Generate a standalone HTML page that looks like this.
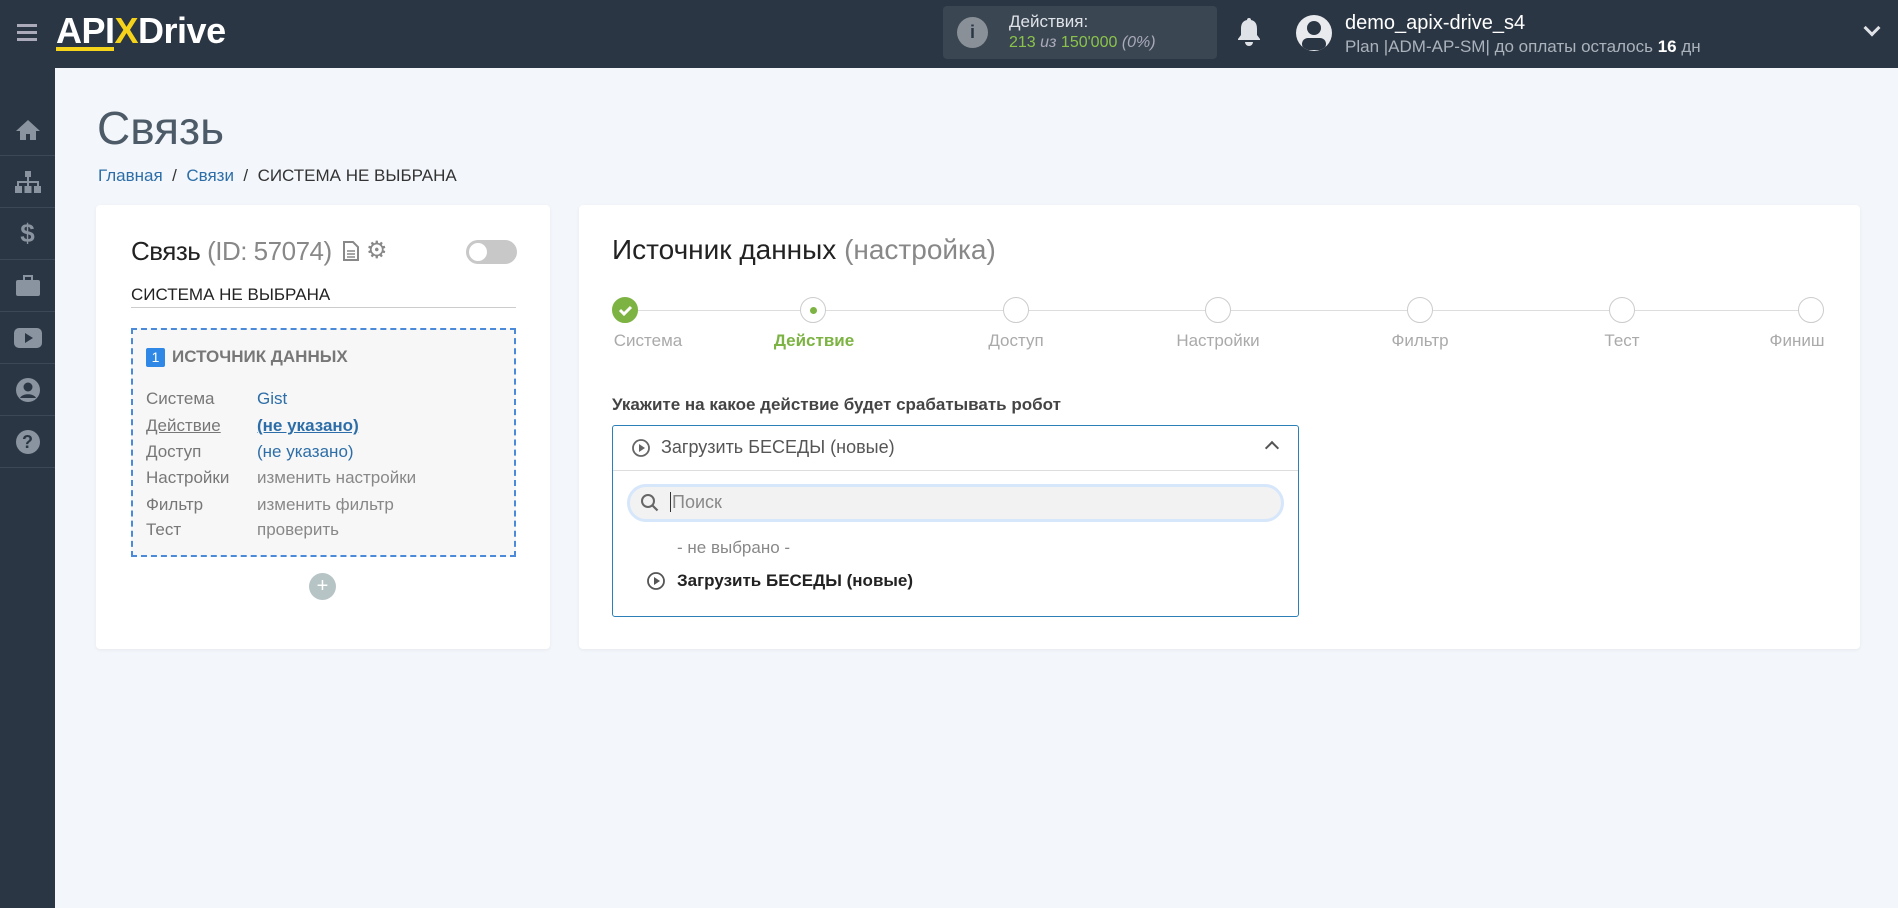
<!DOCTYPE html>
<html><head><meta charset="utf-8"><style>
*{box-sizing:border-box;margin:0;padding:0}
body{width:1898px;height:908px;overflow:hidden;background:#f3f6fa;font-family:"Liberation Sans",sans-serif;position:relative;color:#333}
.abs{position:absolute}
#hdr{left:0;top:0;width:1898px;height:68px;background:#2b3644}
#side{left:0;top:68px;width:55px;height:840px;background:#2b3644}
.si{position:absolute;left:0;width:55px;height:52px;border-bottom:1px solid #3c4858;display:flex;align-items:center;justify-content:center}
.card{background:#fff;border-radius:4px;box-shadow:0 1px 3px rgba(0,0,0,.06)}
.row{position:absolute;left:146px;font-size:17px;color:#777}
.val{position:absolute;left:257px;font-size:17px;color:#888}
.step{position:absolute;top:297px;width:26px;height:26px;border-radius:50%;border:1px solid #ccc;background:#fff}
.sl{position:absolute;top:331px;font-size:17px;color:#aaa;transform:translateX(-50%);white-space:nowrap}
</style></head><body>
<div id="hdr" class="abs">
 <div class="abs" style="left:17px;top:24px;width:20px;height:3px;background:#aab;box-shadow:0 7px 0 #aab,0 14px 0 #aab"></div>
 <div class="abs" style="left:56px;top:10px;font-size:36px;font-weight:bold;color:#fff;letter-spacing:-0.5px">API<span style="color:#f6d31b">X</span>Drive</div>
 <div class="abs" style="left:56px;top:47px;width:58px;height:4px;background:#f6d31b"></div>
 <div class="abs" style="left:943px;top:6px;width:274px;height:53px;background:#3b4653;border-radius:4px">
  <div class="abs" style="left:14px;top:11px;width:31px;height:31px;border-radius:50%;background:#8a9098;color:#2b3644;font-weight:bold;text-align:center;line-height:31px;font-size:18px">i</div>
  <div class="abs" style="left:66px;top:6px;font-size:17px;color:#dfe3e8">Действия:</div>
  <div class="abs" style="left:66px;top:28px;font-size:16px;color:#8bc34a">213 <i style="color:#aab">из</i> 150'000 <i style="color:#aab">(0%)</i></div>
 </div>
 <svg class="abs" style="left:1236px;top:17px" width="26" height="30" viewBox="0 0 26 30"><path d="M13 1c-1.5 0-2 1-2 2C6 4 5 8 5 12v6l-3 4v1h22v-1l-3-4v-6c0-4-1-8-6-9 0-1-.5-2-2-2z" fill="#dfe3e8"/><path d="M9 25a4 4 0 0 0 8 0z" fill="#dfe3e8"/></svg>
 <div class="abs" style="left:1296px;top:15px;width:36px;height:36px;border-radius:50%;background:#e8eaee;overflow:hidden">
  <div class="abs" style="left:11px;top:6px;width:14px;height:14px;border-radius:50%;background:#2b3644"></div>
  <div class="abs" style="left:6px;top:23px;width:24px;height:12px;border-radius:12px;background:#2b3644"></div>
 </div>
 <div class="abs" style="left:1345px;top:12px;font-size:20px;color:#fff">demo_apix-drive_s4</div>
 <div class="abs" style="left:1345px;top:37px;font-size:17px;color:#aab2bc">Plan |ADM-AP-SM| до оплаты осталось <b style="color:#fff">16</b> дн</div>
 <div class="abs" style="left:1866px;top:22px;width:12px;height:12px;border-right:3px solid #dfe3e8;border-bottom:3px solid #dfe3e8;transform:rotate(45deg)"></div>
</div>
<div id="side" class="abs">
 <div class="si" style="top:36px;border-top:0"><svg width="26" height="22" viewBox="0 0 26 22"><path d="M13 1L1 12h4v9h6v-6h4v6h6v-9h4z" fill="#8a94a0"/></svg></div>
 <div class="si" style="top:88px"><svg width="28" height="24"><rect x="11" y="1" width="6" height="6" fill="#8a94a0"/><rect x="1" y="16" width="7" height="7" fill="#8a94a0"/><rect x="10.5" y="16" width="7" height="7" fill="#8a94a0"/><rect x="20" y="16" width="7" height="7" fill="#8a94a0"/><path d="M14 7v5M4 16v-4h20v4M14 12v4" stroke="#8a94a0" stroke-width="2" fill="none"/></svg></div>
 <div class="si" style="top:140px;color:#8a94a0;font-size:26px;font-weight:bold">$</div>
 <div class="si" style="top:192px"><svg width="26" height="22"><rect x="1" y="5" width="24" height="16" rx="2" fill="#8a94a0"/><rect x="9" y="1" width="8" height="5" fill="none" stroke="#8a94a0" stroke-width="2"/></svg></div>
 <div class="si" style="top:244px"><svg width="28" height="20"><rect x="0" y="0" width="28" height="20" rx="5" fill="#8a94a0"/><path d="M11 5l8 5-8 5z" fill="#2b3644"/></svg></div>
 <div class="si" style="top:296px"><svg width="24" height="24"><circle cx="12" cy="12" r="12" fill="#8a94a0"/><circle cx="12" cy="9" r="4.5" fill="#2b3644"/><path d="M4 20c2-5 14-5 16 0" fill="#2b3644"/></svg></div>
 <div class="si" style="top:348px"><div style="width:24px;height:24px;border-radius:50%;background:#8a94a0;color:#2b3644;font-weight:bold;font-size:18px;text-align:center;line-height:24px">?</div></div>
</div>
<div class="abs" style="left:97px;top:101px;font-size:46px;color:#4d5a67">Связь</div>
<div class="abs" style="left:98px;top:166px;font-size:17px;color:#2d6ea8">Главная <span style="color:#333">&nbsp;/&nbsp;</span> Связи <span style="color:#333">&nbsp;/&nbsp; СИСТЕМА НЕ ВЫБРАНА</span></div>

<div class="abs card" style="left:96px;top:205px;width:454px;height:444px"></div>
<div class="abs" style="left:131px;top:236px;font-size:26px;color:#222;letter-spacing:-0.5px">Связь <span style="color:#888">(ID: 57074)</span></div>
<svg class="abs" style="left:343px;top:241px" width="16" height="20"><path d="M1 1h9l5 5v13H1z" fill="none" stroke="#888" stroke-width="2"/><path d="M4 10h8M4 13h8M4 16h8" stroke="#888" stroke-width="1.5"/></svg>
<div class="abs" style="left:366px;top:240px;font-size:24px;color:#888;line-height:22px">⚙</div>
<div class="abs" style="left:466px;top:240px;width:51px;height:24px;border-radius:12px;background:#c8c8c8"><div class="abs" style="left:3px;top:3px;width:18px;height:18px;border-radius:50%;background:#fff"></div></div>
<div class="abs" style="left:131px;top:285px;font-size:17px;color:#222">СИСТЕМА НЕ ВЫБРАНА</div>
<div class="abs" style="left:131px;top:307px;width:385px;height:1px;background:#ccc"></div>
<div class="abs" style="left:131px;top:328px;width:385px;height:229px;border:2px dashed #4a8ad8;background:#f7f7f7"></div>
<div class="abs" style="left:146px;top:348px;width:19px;height:19px;background:#2f88e6;color:#fff;font-size:14px;text-align:center;line-height:19px;border-radius:2px">1</div>
<div class="abs" style="left:172px;top:347px;font-size:17px;font-weight:bold;color:#777">ИСТОЧНИК ДАННЫХ</div>
<div class="row" style="top:389px">Система</div><div class="val" style="top:389px;color:#2d6ea8">Gist</div>
<div class="row" style="top:416px;text-decoration:underline">Действие</div><div class="val" style="top:416px;color:#2d6ea8;font-weight:bold;text-decoration:underline">(не указано)</div>
<div class="row" style="top:442px">Доступ</div><div class="val" style="top:442px;color:#2d6ea8">(не указано)</div>
<div class="row" style="top:468px">Настройки</div><div class="val" style="top:468px">изменить настройки</div>
<div class="row" style="top:495px">Фильтр</div><div class="val" style="top:495px">изменить фильтр</div>
<div class="row" style="top:520px">Тест</div><div class="val" style="top:520px">проверить</div>
<div class="abs" style="left:309px;top:573px;width:27px;height:27px;border-radius:50%;background:#b7c4c6;color:#fff;text-align:center;line-height:27px;font-size:20px">+</div>

<div class="abs card" style="left:579px;top:205px;width:1281px;height:444px"></div>
<div class="abs" style="left:612px;top:234px;font-size:28px;color:#222">Источник данных <span style="color:#888">(настройка)</span></div>
<div class="abs" style="left:625px;top:310px;width:1186px;height:1px;background:#ddd"></div>
<div class="step" style="left:612px;background:#7cb342;border-color:#7cb342"><svg width="24" height="24"><path d="M7 12l4 4 7-7" stroke="#fff" stroke-width="3" fill="none"/></svg></div>
<div class="step" style="left:800px"><div class="abs" style="left:9px;top:9px;width:7px;height:7px;border-radius:50%;background:#7cb342"></div></div>
<div class="step" style="left:1003px"></div><div class="step" style="left:1205px"></div><div class="step" style="left:1407px"></div><div class="step" style="left:1609px"></div><div class="step" style="left:1798px"></div>
<div class="sl" style="left:648px">Система</div>
<div class="sl" style="left:814px;color:#7cb342;font-weight:bold">Действие</div>
<div class="sl" style="left:1016px">Доступ</div>
<div class="sl" style="left:1218px">Настройки</div>
<div class="sl" style="left:1420px">Фильтр</div>
<div class="sl" style="left:1622px">Тест</div>
<div class="sl" style="left:1797px">Финиш</div>
<div class="abs" style="left:612px;top:395px;font-size:17px;font-weight:bold;color:#444">Укажите на какое действие будет срабатывать робот</div>
<div class="abs" style="left:612px;top:425px;width:687px;height:192px;border:1.5px solid #2d7fb8;border-radius:3px;background:#fff"></div>
<div class="abs" style="left:613px;top:470px;width:685px;height:1px;background:#ddd"></div>
<svg class="abs" style="left:631px;top:438px" width="20" height="20"><circle cx="10" cy="10" r="8" fill="none" stroke="#666" stroke-width="1.8"/><path d="M8 6l6 4-6 4z" fill="#666"/></svg>
<div class="abs" style="left:661px;top:437px;font-size:18px;color:#555">Загрузить БЕСЕДЫ (новые)</div>
<div class="abs" style="left:1267px;top:443px;width:10px;height:10px;border-left:2px solid #555;border-top:2px solid #555;transform:rotate(45deg)"></div>
<div class="abs" style="left:627px;top:484px;width:657px;height:38px;border-radius:19px;background:#f2f2f2;border:3px solid #d6e6fb"></div>
<svg class="abs" style="left:640px;top:493px" width="20" height="20"><circle cx="8" cy="8" r="6" fill="none" stroke="#666" stroke-width="2"/><path d="M12.5 12.5l5 5" stroke="#666" stroke-width="2.2"/></svg>
<div class="abs" style="left:670px;top:492px;width:1px;height:20px;background:#333"></div>
<div class="abs" style="left:672px;top:492px;font-size:18px;color:#888">Поиск</div>
<div class="abs" style="left:677px;top:538px;font-size:17px;color:#888">- не выбрано -</div>
<svg class="abs" style="left:646px;top:571px" width="20" height="20"><circle cx="10" cy="10" r="8" fill="none" stroke="#555" stroke-width="1.8"/><path d="M8 6l6 4-6 4z" fill="#555"/></svg>
<div class="abs" style="left:677px;top:571px;font-size:17px;font-weight:bold;color:#222">Загрузить БЕСЕДЫ (новые)</div>
</body></html>
